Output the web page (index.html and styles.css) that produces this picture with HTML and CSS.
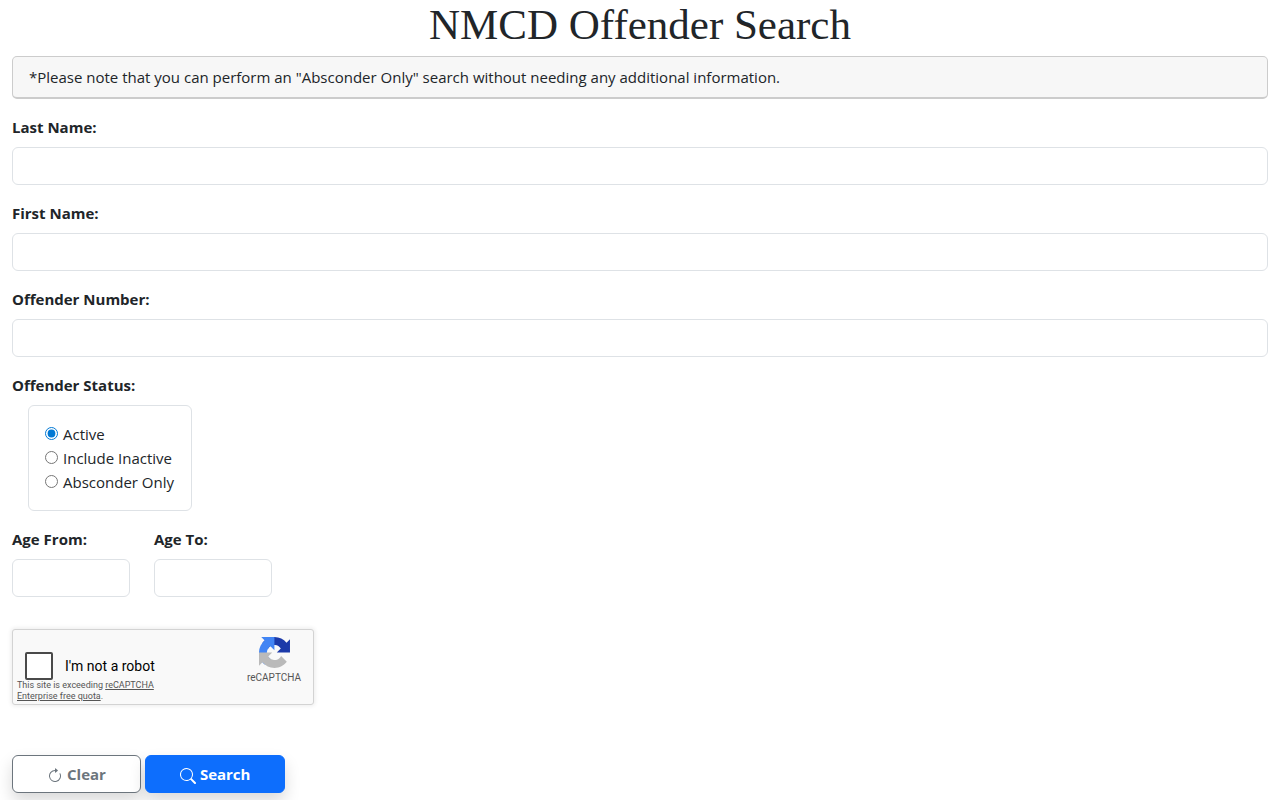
FILE: index.html
```
<!DOCTYPE html>
<html lang="en">
<head>
  <meta charset="UTF-8">
  <meta name="viewport" content="width=device-width, initial-scale=1">
  <title>NMCD Offender Search</title>
  <link rel="stylesheet" href="styles.css">
</head>
<body>
  <h1>NMCD Offender Search</h1>

  <form class="search-form">
    <div class="note">*Please note that you can perform an "Absconder Only" search without needing any additional information.</div>

    <div class="field">
      <label class="field-label" for="lastName">Last Name:</label>
      <input type="text" class="form-control" id="lastName">
    </div>

    <div class="field">
      <label class="field-label" for="firstName">First Name:</label>
      <input type="text" class="form-control" id="firstName">
    </div>

    <div class="field">
      <label class="field-label" for="offenderNumber">Offender Number:</label>
      <input type="text" class="form-control" id="offenderNumber">
    </div>

    <fieldset class="field">
      <legend class="field-label">Offender Status:</legend>
      <div class="status-box">
        <label class="radio"><input type="radio" name="status" value="active" checked>Active</label>
        <label class="radio"><input type="radio" name="status" value="inactive">Include Inactive</label>
        <label class="radio"><input type="radio" name="status" value="absconder">Absconder Only</label>
      </div>
    </fieldset>

    <div class="age-row">
      <div class="age">
        <label class="field-label" for="ageFrom">Age From:</label>
        <input type="text" class="form-control" id="ageFrom">
      </div>
      <div class="age">
        <label class="field-label" for="ageTo">Age To:</label>
        <input type="text" class="form-control" id="ageTo">
      </div>
    </div>

    <!-- captcha -->
    <div class="captcha">
      <div class="captcha-main">
        <div class="captcha-check">
          <input type="checkbox" id="robot">
          <label for="robot">I'm not a robot</label>
        </div>
        <div class="captcha-notice">This site is exceeding <a href="#"><span>reCAPTCHA</span> <span>Enterprise free quota</span></a>.</div>
      </div>
      <div class="captcha-brand">
        <svg class="captcha-logo" viewBox="0 0 64 64" aria-hidden="true">
          <path fill="#1c3aa9" d="M64 31.955l-.033-1.37V4.687l-7.16 7.16C50.948 4.674 42.033.093 32.05.093c-10.4 0-19.622 4.96-25.458 12.64l11.736 11.86a15.55 15.55 0 0 1 4.754-5.334c2.05-1.6 4.952-2.906 8.968-2.906.485 0 .86.057 1.135.163 4.976.393 9.288 3.14 11.828 7.124l-8.307 8.307L64 31.953"/>
          <path fill="#4285f4" d="M31.862.094l-1.37.033H4.594l7.16 7.16C4.58 13.147 0 22.06 0 32.046c0 10.4 4.96 19.622 12.64 25.458L24.5 45.768a15.55 15.55 0 0 1-5.334-4.754c-1.6-2.05-2.906-4.952-2.906-8.968 0-.485.057-.86.163-1.135.393-4.976 3.14-9.288 7.124-11.828l8.307 8.307L31.86.095"/>
          <path fill="#bababa" d="M.001 32.045l.033 1.37v25.898l7.16-7.16c5.86 7.173 14.774 11.754 24.76 11.754 10.4 0 19.622-4.96 25.458-12.64l-11.736-11.86a15.55 15.55 0 0 1-4.754 5.334c-2.05 1.6-4.952 2.906-8.968 2.906-.485 0-.86-.057-1.135-.163-4.976-.393-9.288-3.14-11.828-7.124l8.307-8.307c-10.522.04-22.4.066-27.295-.005"/>
        </svg>
        <span>reCAPTCHA</span>
      </div>
    </div>

    <div class="buttons">
      <button type="reset" class="btn btn-clear">
        <svg class="icon" viewBox="0 0 16 16" fill="currentColor" aria-hidden="true">
          <path fill-rule="evenodd" d="M8 3a5 5 0 1 0 4.546 2.914.5.5 0 0 1 .908-.417A6 6 0 1 1 8 2z"/>
          <path d="M8 4.466V.534a.25.25 0 0 1 .41-.192l2.36 1.966c.12.1.12.284 0 .384L8.41 4.658A.25.25 0 0 1 8 4.466"/>
        </svg>
        Clear
      </button>
      <button type="submit" class="btn btn-search">
        <svg class="icon" viewBox="0 0 16 16" fill="currentColor" aria-hidden="true">
          <path d="M11.742 10.344a6.5 6.5 0 1 0-1.397 1.398h-.001q.044.06.098.115l3.85 3.85a1 1 0 0 0 1.415-1.414l-3.85-3.85a1 1 0 0 0-.115-.1zM12 6.5a5.5 5.5 0 1 1-11 0 5.5 5.5 0 0 1 11 0"/>
        </svg>
        Search
      </button>
    </div>
  </form>
</body>
</html>
```
FILE: styles.css
```
* {
  box-sizing: border-box;
}
body {
  min-height: 100vh;
  margin: 0;
  padding: 0 12px;
  font-family: "Segoe UI", "Open Sans", "Noto Sans", sans-serif;
  font-size: 15px;
  line-height: 24px;
  color: #212529;
  background: #fff;
}
h1 {
  margin: 0 0 6px;
  font-family: Georgia, "Liberation Serif", serif;
  font-size: 43px;
  font-weight: 400;
  line-height: 50px;
  text-align: center;
}
.note {
  margin-bottom: 16px;
  padding: 8px 16px;
  border: 1px solid #ccc;
  border-bottom-width: 2px;
  border-radius: 5px;
  background: #f7f7f7;
}
.field {
  margin: 0 0 16px;
  padding: 0;
  border: 0;
}
.field-label {
  display: block;
  margin-bottom: 8px;
  padding: 0;
  font-weight: 700;
}
.form-control {
  display: block;
  width: 100%;
  height: 38px;
  padding: 6px 12px;
  border: 1px solid #dee2e6;
  border-radius: 6px;
  font: inherit;
  color: inherit;
  background: #fff;
}
.status-box {
  width: 164px;
  margin-left: 16px;
  padding: 16px;
  border: 1px solid #dee2e6;
  border-radius: 6px;
}
.radio {
  display: flex;
  align-items: center;
  gap: 5px;
  white-space: nowrap;
}
.radio input {
  width: 13px;
  height: 13px;
  margin: 0 0 2px;
  accent-color: #0078d4;
}
.age-row {
  display: flex;
  gap: 24px;
  margin-bottom: 32px;
}
.age {
  width: 118px;
}

/* captcha */
.captcha {
  display: flex;
  justify-content: space-between;
  width: 302px;
  min-height: 76px;
  margin-bottom: 50px;
  border: 1px solid #d3d3d3;
  border-radius: 3px;
  background: #f9f9f9;
  box-shadow: 0 0 4px 1px rgba(0, 0, 0, 0.08);
  font-family: Roboto, sans-serif;
}
.captcha-main {
  width: 160px;
  padding: 22px 0 0 4px;
}
.captcha-check {
  display: flex;
  align-items: center;
  gap: 12px;
  padding-left: 8px;
  font-size: 14px;
  line-height: 28px;
  color: #000;
}
.captcha-check input {
  appearance: none;
  width: 28px;
  height: 28px;
  margin: 0;
  border: 2px solid #4a4a4a;
  border-radius: 2px;
  background: #fff;
}
.captcha-notice {
  font-size: 9px;
  line-height: 11px;
  color: #555;
}
.captcha-notice a {
  color: #555;
}
.captcha-brand {
  display: flex;
  flex-direction: column;
  align-items: center;
  width: 78px;
  padding-top: 7px;
  font-size: 10px;
  line-height: 20px;
  color: #555;
}
.captcha-logo {
  width: 31px;
  height: 31px;
}

/* buttons */
.buttons {
  display: flex;
  gap: 4px;
}
.btn {
  display: flex;
  align-items: center;
  justify-content: center;
  gap: 4px;
  height: 38px;
  padding: 0 34px;
  border: 1px solid;
  border-radius: 6px;
  font: inherit;
  font-weight: 700;
  box-shadow: 0 8px 16px rgba(0, 0, 0, 0.15);
}
.btn-clear {
  border-color: #6c757d;
  color: #6c757d;
  background: #fff;
}
.btn-search {
  border-color: #0d6efd;
  color: #fff;
  background: #0d6efd;
}
.icon {
  width: 16px;
  height: 16px;
  margin-top: 3px;
}
```
